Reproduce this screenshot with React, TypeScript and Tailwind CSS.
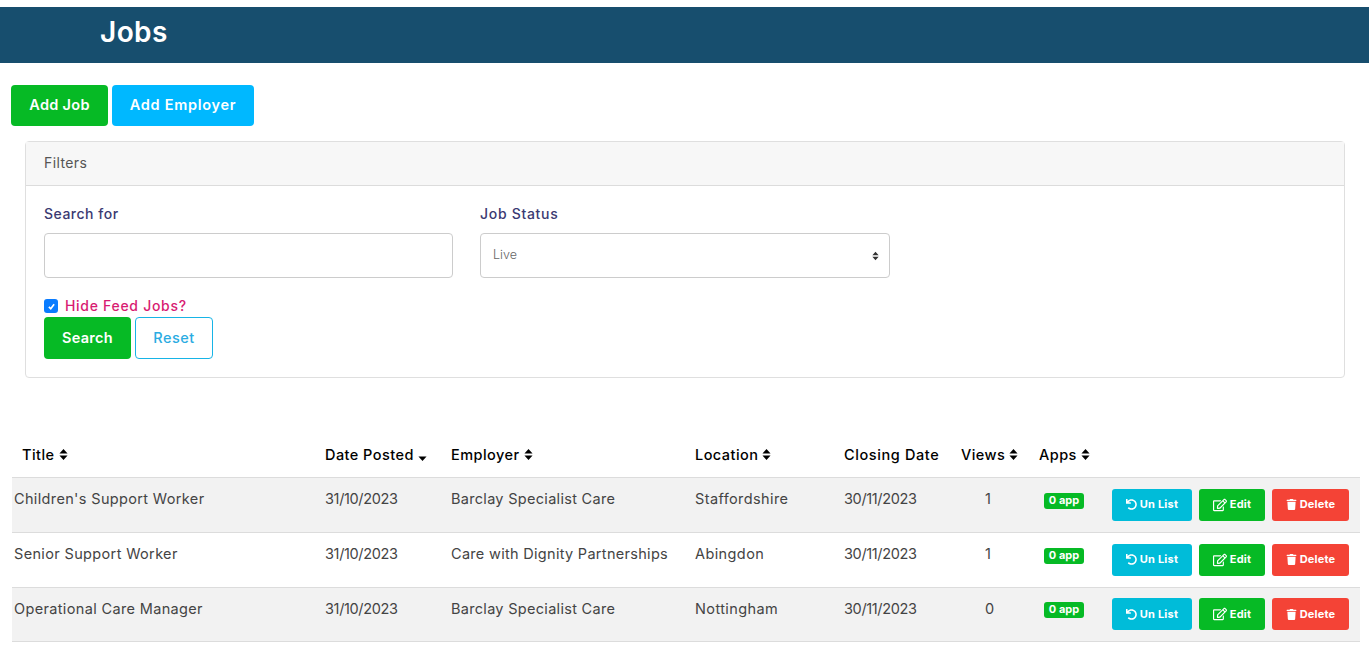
import { FaRegEdit, FaTrash, FaUndo } from 'react-icons/fa';

const jobs = [
  { title: "Children's Support Worker", posted: '31/10/2023', employer: 'Barclay Specialist Care', location: 'Staffordshire', closing: '30/11/2023', views: 1, height: 'h-[55px]' },
  { title: 'Senior Support Worker', posted: '31/10/2023', employer: 'Care with Dignity Partnerships', location: 'Abingdon', closing: '30/11/2023', views: 1, height: 'h-[55px]' },
  { title: 'Operational Care Manager', posted: '31/10/2023', employer: 'Barclay Specialist Care', location: 'Nottingham', closing: '30/11/2023', views: 0, height: 'h-[54px]' },
];

const SortIcon = () => (
  <svg viewBox="0 0 10 14" className="inline-block w-[9px] h-[13px] ml-[4px] align-[-1px]" fill="currentColor">
    <path d="M5 1 9.5 6H.5zM5 13 .5 8h9z" />
  </svg>
);

const SortDown = () => (
  <svg viewBox="0 0 10 14" className="inline-block w-[9px] h-[13px] ml-[4px] align-[-2px]" fill="currentColor">
    <path d="M5 13 .5 8h9z" />
  </svg>
);

const App = () => {
  return (
    <div className="min-h-[650px] bg-white pt-[7px] font-['Inter','Open_Sans',sans-serif] text-[#212529] overflow-hidden">
      <div className="h-[56px] bg-[#174e6e] pl-[100px] pb-[6px] flex items-center">
        <h1 className="text-[28px] tracking-[0.4px] font-semibold text-white">Jobs</h1>
      </div>

      <div className="flex gap-[4px] pl-[11px] mt-[22px]">
        <button className="w-[97px] h-[41px] pb-[2px] rounded-[4px] bg-[#06ba25] text-white text-[14.5px] tracking-[0.3px] font-semibold">Add Job</button>
        <button className="w-[142px] h-[41px] pb-[2px] rounded-[4px] bg-[#00b8ff] text-white text-[14.5px] tracking-[0.7px] font-semibold">Add Employer</button>
      </div>

      <div className="ml-[25px] w-[1320px] h-[237px] mt-[15px] border border-[#dfdfdf] rounded-[4px]">
        <div className="h-[44px] bg-[#f7f7f7] border-b border-[#dcdcdc] pl-[18px] pb-[2px] flex items-center text-[14px] tracking-[0.4px] text-[#555]">Filters</div>
        <div className="pl-[18px] pt-[19px]">
          <div className="flex gap-[27px]">
            <div className="w-[409px]">
              <label className="block text-[14px] tracking-[0.5px] font-medium text-[#3b3a72] leading-[17px] mb-[11px]">Search for</label>
              <input className="w-full h-[45px] border border-[#ccc] rounded-[4px]" />
            </div>
            <div className="w-[410px]">
              <label className="block text-[14px] tracking-[0.7px] font-medium text-[#3b3a72] leading-[17px] mb-[11px]">Job Status</label>
              <div className="h-[45px] border border-[#ccc] rounded-[4px] flex items-center justify-between pl-[12px] pr-[10px] text-[12.5px] font-light text-[#666]">
                <span>Live</span>
                <svg viewBox="0 0 10 14" className="w-[7px] h-[10px] text-[#333]" fill="currentColor">
                  <path d="M5 1 9.5 6H.5zM5 13 .5 8h9z" />
                </svg>
              </div>
            </div>
          </div>
          <div className="flex items-center gap-[7px] mt-[19px] h-[18px]">
            <span className="w-[14px] h-[14px] rounded-[3px] bg-[#0a7cff] flex items-center justify-center">
              <svg viewBox="0 0 12 12" className="w-[9px] h-[9px]" fill="none" stroke="white" strokeWidth="2.2">
                <path d="M2.5 6.5 5 9l4.5-6" />
              </svg>
            </span>
            <span className="text-[14px] tracking-[0.7px] font-medium text-[#d81b72] relative top-[-1px]">Hide Feed Jobs?</span>
          </div>
          <div className="flex gap-[4px] mt-[2px]">
            <button className="w-[87px] h-[42px] rounded-[4px] bg-[#06ba25] text-white text-[14.5px] tracking-[0.3px] font-semibold">Search</button>
            <button className="w-[78px] h-[42px] rounded-[4px] border border-[#17b4e6] text-[#2bace2] text-[14.5px] tracking-[0.5px] font-medium">Reset</button>
          </div>
        </div>
      </div>

      <table className="ml-[12px] mt-[55px] w-[1348px] table-fixed border-collapse text-[14.5px]">
        <colgroup>
          <col className="w-[311px]" />
          <col className="w-[128px]" />
          <col className="w-[244px]" />
          <col className="w-[149px]" />
          <col className="w-[117px]" />
          <col className="w-[78px]" />
          <col className="w-[72px]" />
          <col />
        </colgroup>
        <thead>
          <tr className="h-[44px] border-b border-[#dcdcdc] text-left text-[14.5px] tracking-[0.45px] font-medium text-black">
            <th className="font-medium pl-[10px]">Title<SortIcon /></th>
            <th className="font-medium pl-[2px]">Date Posted<SortDown /></th>
            <th className="font-medium">Employer<SortIcon /></th>
            <th className="font-medium">Location<SortIcon /></th>
            <th className="font-medium tracking-[0.6px]">Closing Date</th>
            <th className="font-medium">Views<SortIcon /></th>
            <th className="font-medium">Apps<SortIcon /></th>
            <th />
          </tr>
        </thead>
        <tbody>
          {jobs.map((job, i) => (
            <tr key={job.title} className={`${job.height} border-b border-[#dcdcdc] text-[#444] ${i % 2 === 0 ? 'bg-[#f2f2f2]' : 'bg-white'}`}>
              <td className="pl-[2px] pb-[11px] tracking-[0.35px]">{job.title}</td>
              <td className="pl-[2px] pb-[11px] tracking-[-0.35px]">{job.posted}</td>
              <td className="pb-[11px] tracking-[0.3px]">{job.employer}</td>
              <td className="pb-[11px] tracking-[0.4px]">{job.location}</td>
              <td className="pb-[11px] tracking-[-0.35px]">{job.closing}</td>
              <td className="pl-[24px] pb-[11px]">{job.views}</td>
              <td className="pl-[5px]">
                <span className="block w-[40px] h-[16px] leading-[15px] rounded-[3px] bg-[#06ba25] text-white text-[11px] font-bold text-center mb-[8px]">0 app</span>
              </td>
              <td>
                <div className="flex gap-[7px] pl-[1px] text-white text-[11px] tracking-[0.2px] font-bold">
                  <span className="w-[80px] h-[32px] rounded-[3px] bg-[#00bcd9] flex items-center justify-center gap-[3px]"><FaUndo size={11} />Un List</span>
                  <span className="w-[66px] h-[32px] rounded-[3px] bg-[#06ba25] flex items-center justify-center gap-[3px]"><FaRegEdit size={14} />Edit</span>
                  <span className="w-[77px] h-[32px] rounded-[3px] bg-[#f44336] flex items-center justify-center gap-[3px]"><FaTrash size={11} />Delete</span>
                </div>
              </td>
            </tr>
          ))}
        </tbody>
      </table>
    </div>
  );
};

export default App;
